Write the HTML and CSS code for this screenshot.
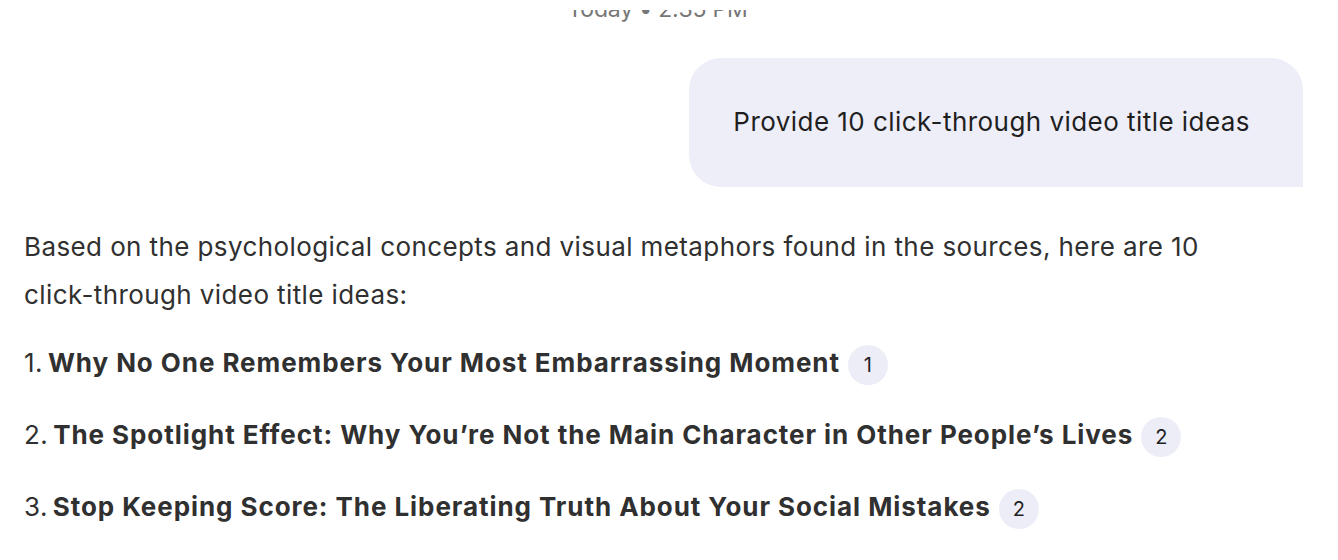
FILE: index.html
```html
<!DOCTYPE html>
<html>
<head>
<meta charset="utf-8">
<link rel="stylesheet" href="styles.css">
</head>
<body>
<div class="chat">
  <div class="stamp-clip"><div class="stamp">Today • 2:35 PM</div></div>
  <div class="user-row">
    <div class="bubble">Provide 10 click-through video title ideas</div>
  </div>
  <div class="answer">
    <p class="intro">Based on the psychological concepts and visual metaphors found in the sources, here are 10 <span class="nw">click-through</span> video title ideas:</p>
    <ol class="titles">
      <li><span class="num">1.</span> <b>Why No One Remembers Your Most Embarrassing Moment</b> <span class="cite">1</span></li>
      <li><span class="num">2.</span> <b>The Spotlight Effect: Why You’re Not the Main Character in Other People’s Lives</b> <span class="cite">2</span></li>
      <li><span class="num">3.</span> <b>Stop Keeping Score: The Liberating Truth About Your Social Mistakes</b> <span class="cite">2</span></li>
    </ol>
  </div>
</div>
</body>
</html>
```
FILE: styles.css
```css
html, body {
  margin: 0;
  padding: 0;
  background: #ffffff;
  overflow: hidden;
}
body {
  font-family: Inter, Roboto, sans-serif;
  color: #303030;
  letter-spacing: 0.4px;
}
.chat {
  padding: 0 35px 0 24px;
}
.stamp-clip {
  margin-top: 10px;
  height: 14px;
  overflow: hidden;
}
.stamp {
  margin-top: -16px;
  padding-right: 12px;
  text-align: center;
  font-size: 23px;
  line-height: 30px;
  color: #777777;
  letter-spacing: -0.2px;
}
.user-row {
  display: flex;
  justify-content: flex-end;
  margin-top: 34px;
}
.bubble {
  background: #eeeef8;
  border-radius: 32px 32px 0 32px;
  padding: 47px 53px 48px 44px;
  font-size: 26px;
  line-height: 34px;
  color: #1f1f1f;
  letter-spacing: 0.45px;
}
.answer {
  margin-top: 36px;
}
.intro {
  margin: 0;
  font-size: 26px;
  line-height: 48px;
}
.nw {
  white-space: nowrap;
}
.titles {
  list-style: none;
  margin: 24px 0 0 0;
  padding: 0;
}
.titles li {
  font-size: 26px;
  line-height: 40px;
  height: 40px;
  margin-bottom: 32px;
  display: flex;
  align-items: center;
}
.num {
  margin-right: 5px;
}
.titles b {
  font-weight: 700;
  letter-spacing: 0.93px;
}
.cite {
  display: inline-flex;
  align-items: center;
  justify-content: center;
  width: 40px;
  height: 40px;
  border-radius: 50%;
  background: #ededf8;
  font-size: 20px;
  margin-left: 8px;
  color: #1f1f1f;
  letter-spacing: 0;
  position: relative;
  top: 2px;
}
```
